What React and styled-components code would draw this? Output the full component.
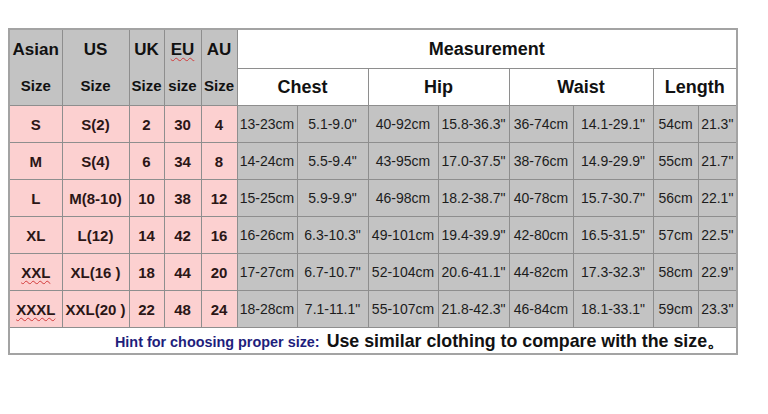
import styled, { createGlobalStyle } from 'styled-components';

const GlobalStyle = createGlobalStyle`
    body {
        margin: 0;
        background: #ffffff;
        font-family: "Liberation Sans", Arial, sans-serif;
    }
`;

const sizes = [
    { asian: 'S', us: 'S(2)', uk: '2', eu: '30', au: '4', chest: ['13-23cm', '5.1-9.0"'], hip: ['40-92cm', '15.8-36.3"'], waist: ['36-74cm', '14.1-29.1"'], length: ['54cm', '21.3"'] },
    { asian: 'M', us: 'S(4)', uk: '6', eu: '34', au: '8', chest: ['14-24cm', '5.5-9.4"'], hip: ['43-95cm', '17.0-37.5"'], waist: ['38-76cm', '14.9-29.9"'], length: ['55cm', '21.7"'] },
    { asian: 'L', us: 'M(8-10)', uk: '10', eu: '38', au: '12', chest: ['15-25cm', '5.9-9.9"'], hip: ['46-98cm', '18.2-38.7"'], waist: ['40-78cm', '15.7-30.7"'], length: ['56cm', '22.1"'] },
    { asian: 'XL', us: 'L(12)', uk: '14', eu: '42', au: '16', chest: ['16-26cm', '6.3-10.3"'], hip: ['49-101cm', '19.4-39.9"'], waist: ['42-80cm', '16.5-31.5"'], length: ['57cm', '22.5"'] },
    { asian: 'XXL', us: 'XL(16 )', uk: '18', eu: '44', au: '20', chest: ['17-27cm', '6.7-10.7"'], hip: ['52-104cm', '20.6-41.1"'], waist: ['44-82cm', '17.3-32.3"'], length: ['58cm', '22.9"'] },
    { asian: 'XXXL', us: 'XXL(20 )', uk: '22', eu: '48', au: '24', chest: ['18-28cm', '7.1-11.1"'], hip: ['55-107cm', '21.8-42.3"'], waist: ['46-84cm', '18.1-33.1"'], length: ['59cm', '23.3"'] },
];

// px widths of the 13 columns, left to right
const colWidths = [53, 67, 35, 37, 36, 60, 71, 70, 71, 64, 80, 45, 39];

const Page = styled.div`
    padding: 28px 0 0 8px;
`;

const Table = styled.table`
    border-collapse: collapse;
    table-layout: fixed;
    width: 728px;
    border: 2px solid #a3a3a3;
`;

const HeadCell = styled.th`
    border: 1px solid #8e8e8e;
    background: ${({ $white }) => ($white ? '#ffffff' : '#c3c3c3')};
    color: #111;
    font-size: 18px;
    font-weight: bold;
    text-align: center;
    padding: 0;
    height: ${({ $h }) => $h || 36}px;
`;

const StackLine = styled.div`
    height: 36px;
    line-height: 36px;
    font-size: ${({ $small }) => ($small ? 15 : 17)}px;
    white-space: nowrap;
`;

const Squiggle = styled.span`
    text-decoration: underline wavy #d23a3a;
    text-decoration-thickness: 1px;
    text-underline-offset: 2px;
`;

const Row = styled.tr`
    height: 37px;
`;

const SizeCell = styled.td`
    border: 1px solid #8e8e8e;
    background: #fcd0d0;
    color: #2b1616;
    font-size: 15px;
    font-weight: bold;
    text-align: center;
    padding: 0;
    white-space: nowrap;
`;

const DataCell = styled.td`
    border: 1px solid #8e8e8e;
    background: #c3c3c3;
    color: #1c1c1c;
    font-size: 14px;
    text-align: center;
    padding: 0 1px;
    white-space: nowrap;
`;

const HintCell = styled.td`
    border: 1px solid #8e8e8e;
    background: #ffffff;
    height: 25px;
    text-align: right;
    padding: 0 11px 0 0;
    white-space: nowrap;
`;

const HintLabel = styled.span`
    color: #1e1e7c;
    font-size: 14.4px;
    font-weight: bold;
`;

const HintText = styled.span`
    color: #111;
    font-size: 17.8px;
    font-weight: bold;
    margin-left: 7px;
`;

const wavy = (text) => (text.startsWith('XX') ? <Squiggle>{text}</Squiggle> : text);

const App = () => (
    <Page>
        <GlobalStyle />
        <Table>
            <colgroup>
                {colWidths.map((w, i) => <col key={i} style={{ width: w }} />)}
            </colgroup>
            <thead>
                <tr>
                    <HeadCell rowSpan={2}><StackLine>Asian</StackLine><StackLine $small>Size</StackLine></HeadCell>
                    <HeadCell rowSpan={2}><StackLine>US</StackLine><StackLine $small>Size</StackLine></HeadCell>
                    <HeadCell rowSpan={2}><StackLine>UK</StackLine><StackLine $small>Size</StackLine></HeadCell>
                    <HeadCell rowSpan={2}><StackLine><Squiggle>EU</Squiggle></StackLine><StackLine $small>size</StackLine></HeadCell>
                    <HeadCell rowSpan={2}><StackLine>AU</StackLine><StackLine $small>Size</StackLine></HeadCell>
                    <HeadCell $white $h={38} colSpan={8}>Measurement</HeadCell>
                </tr>
                <tr>
                    <HeadCell $white colSpan={2}>Chest</HeadCell>
                    <HeadCell $white colSpan={2}>Hip</HeadCell>
                    <HeadCell $white colSpan={2}>Waist</HeadCell>
                    <HeadCell $white colSpan={2}>Length</HeadCell>
                </tr>
            </thead>
            <tbody>
                {sizes.map((s) => (
                    <Row key={s.asian}>
                        <SizeCell>{wavy(s.asian)}</SizeCell>
                        <SizeCell>{s.us}</SizeCell>
                        <SizeCell>{s.uk}</SizeCell>
                        <SizeCell>{s.eu}</SizeCell>
                        <SizeCell>{s.au}</SizeCell>
                        {[...s.chest, ...s.hip, ...s.waist, ...s.length].map((v, i) => (
                            <DataCell key={i}>{v}</DataCell>
                        ))}
                    </Row>
                ))}
                <tr>
                    <HintCell colSpan={13}>
                        <HintLabel>Hint for choosing proper size:</HintLabel>
                        <HintText>Use similar clothing to compare with the size。</HintText>
                    </HintCell>
                </tr>
            </tbody>
        </Table>
    </Page>
);

export default App;
